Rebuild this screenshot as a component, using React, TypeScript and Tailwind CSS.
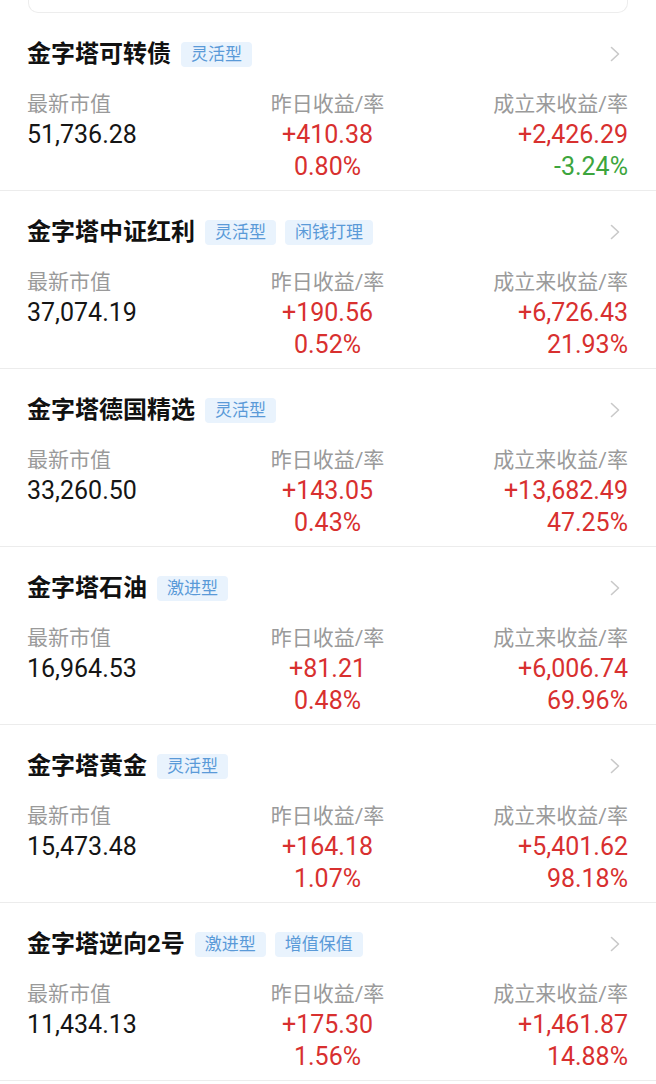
import React from 'react';

type Fund = {
  name: string;
  tags: string[];
  value: string;
  dayGain: string;
  dayRate: string;
  totalGain: string;
  totalRate: string;
};

const funds: Fund[] = [
  { name: '金字塔可转债', tags: ['灵活型'], value: '51,736.28', dayGain: '+410.38', dayRate: '0.80%', totalGain: '+2,426.29', totalRate: '-3.24%' },
  { name: '金字塔中证红利', tags: ['灵活型', '闲钱打理'], value: '37,074.19', dayGain: '+190.56', dayRate: '0.52%', totalGain: '+6,726.43', totalRate: '21.93%' },
  { name: '金字塔德国精选', tags: ['灵活型'], value: '33,260.50', dayGain: '+143.05', dayRate: '0.43%', totalGain: '+13,682.49', totalRate: '47.25%' },
  { name: '金字塔石油', tags: ['激进型'], value: '16,964.53', dayGain: '+81.21', dayRate: '0.48%', totalGain: '+6,006.74', totalRate: '69.96%' },
  { name: '金字塔黄金', tags: ['灵活型'], value: '15,473.48', dayGain: '+164.18', dayRate: '1.07%', totalGain: '+5,401.62', totalRate: '98.18%' },
  { name: '金字塔逆向2号', tags: ['激进型', '增值保值'], value: '11,434.13', dayGain: '+175.30', dayRate: '1.56%', totalGain: '+1,461.87', totalRate: '14.88%' },
];

const font = { fontFamily: 'Roboto, "Noto Sans CJK SC", sans-serif' };

function tone(v: string) {
  return v.startsWith('-') ? 'text-[#3da53d]' : 'text-[#d8302f]';
}

function FundRow({ f }: { f: Fund }) {
  return (
    <div className="border-b border-[#ececec] pl-[27px] pr-[28px] pt-[25px] pb-[7px]">
      {/* title line */}
      <div className="flex items-center h-[32px]">
        <span className="text-[24px] leading-[32px] font-bold text-[#111]">{f.name}</span>
        <div className="flex gap-[9px] ml-[10px]">
          {f.tags.map((t) => (
            <span key={t} className="h-[25px] px-[10px] rounded-[4px] bg-[#e9f3fd] text-[#5a9ad8] text-[17px] leading-[25px]">
              {t}
            </span>
          ))}
        </div>
        <svg className="ml-auto mr-[8px]" width="10" height="16" viewBox="0 0 10 16" fill="none">
          <path d="M1.5 1.5L8.5 8L1.5 14.5" stroke="#c9c9c9" strokeWidth="1.6" strokeLinecap="round" strokeLinejoin="round" />
        </svg>
      </div>

      {/* figures */}
      <div className="grid grid-cols-3 mt-[20px]">
        <div className="text-left">
          <div className="text-[21px] leading-[29px] text-[#9a9a9a]">最新市值</div>
          <div className="text-[25px] leading-[32px] text-[#151515]">{f.value}</div>
        </div>
        <div className="text-center">
          <div className="text-[21px] leading-[29px] text-[#9a9a9a]">昨日收益/率</div>
          <div className={`text-[25px] leading-[32px] ${tone(f.dayGain)}`}>{f.dayGain}</div>
          <div className={`text-[25px] leading-[32px] ${tone(f.dayRate)}`}>{f.dayRate}</div>
        </div>
        <div className="text-right">
          <div className="text-[21px] leading-[29px] text-[#9a9a9a]">成立来收益/率</div>
          <div className={`text-[25px] leading-[32px] ${tone(f.totalGain)}`}>{f.totalGain}</div>
          <div className={`text-[25px] leading-[32px] ${tone(f.totalRate)}`}>{f.totalRate}</div>
        </div>
      </div>
    </div>
  );
}

export default function App() {
  return (
    <div className="w-[656px] h-[1084px] overflow-hidden bg-white" style={font}>
      {/* bottom edge of the card above */}
      <div className="mx-[28px] h-[13px] border border-t-0 border-[#ededed] rounded-b-[10px]"></div>
      {funds.map((f) => (
        <FundRow key={f.name} f={f} />
      ))}
    </div>
  );
}
